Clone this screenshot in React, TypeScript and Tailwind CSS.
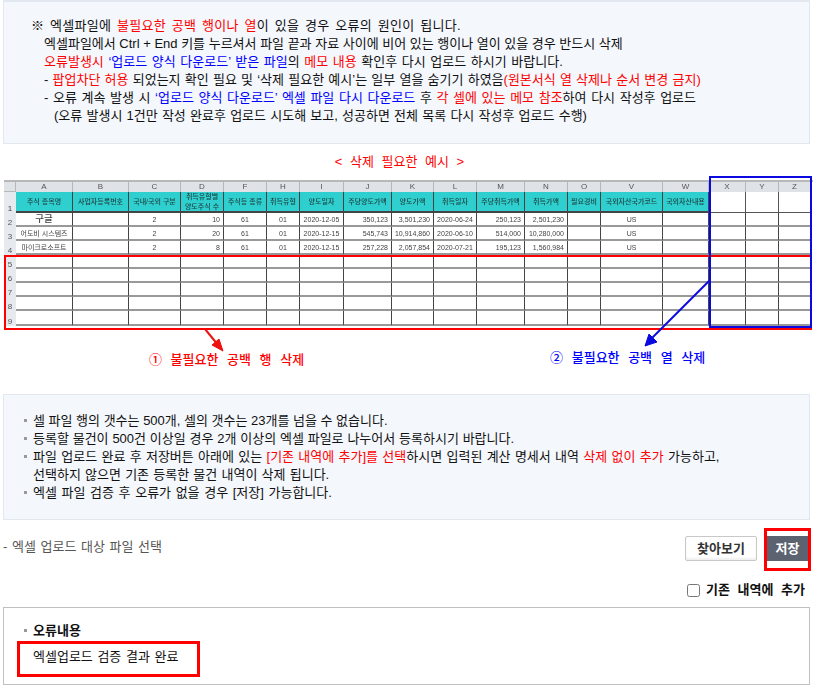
const columns = ['A', 'B', 'C', 'D', 'F', 'H', 'I', 'J', 'K', 'L', 'M', 'N', 'O', 'V', 'W', 'X', 'Y', 'Z'];

const headers = [
  '주식 종목명', '사업자등록번호', '국내/국외 구분', '취득유형별\n양도주식 수', '주식등 종류', '취득유형', '양도일자', '주당양도가액',
  '양도가액', '취득일자', '주당취득가액', '취득가액', '필요경비', '국외자산국가코드', '국외자산내용', '', '', '',
];

const rows = [
  ['구글', '', '2', '10', '61', '01', '2020-12-05', '350,123', '3,501,230', '2020-06-24', '250,123', '2,501,230', '', 'US', '', '', '', ''],
  ['어도비 시스템즈', '', '2', '20', '61', '01', '2020-12-15', '545,743', '10,914,860', '2020-06-10', '514,000', '10,280,000', '', 'US', '', '', '', ''],
  ['마이크로소프트', '', '2', '8', '61', '01', '2020-12-15', '257,228', '2,057,854', '2020-07-21', '195,123', '1,560,984', '', 'US', '', '', '', ''],
];

const rightAligned = [3, 7, 8, 10, 11];
const blankRows = [5, 6, 7, 8, 9];
const blank = Array.from({ length: 18 }, () => '');

function Bullet() {
  return <span className="mr-[6px] mb-[3px] inline-block h-[3px] w-[3px] bg-[#999999] align-middle" />;
}

function Red({ children }: { children: React.ReactNode }) {
  return <span className="text-[#ff0000]">{children}</span>;
}

function Blue({ children }: { children: React.ReactNode }) {
  return <span className="text-[#0000ff]">{children}</span>;
}

function Sheet() {
  return (
    <div className="relative ml-px h-[155px] w-[809px] pt-[6px]">
      <div className="grid grid-cols-[12px_57px_56px_52px_43px_43px_33px_44px_48px_42px_43px_48px_43px_33px_62px_46px_37px_33px_32px] grid-rows-[10px_21px_14px_14px_14px_14px_14px_14px_14px_15px] border-t-2 border-[#b8b8b8] text-[7px] leading-none text-[#444444] blur-[0.3px] [word-spacing:0]">
        <div className="border-r border-b border-[#b8b8b8] bg-[#dfe3e8]" />
        {columns.map((c) => (
          <div key={c} className="flex items-center justify-center border-r border-[#b8b8b8] bg-[#dfe3e8] text-[8px] text-[#555555]">
            {c}
          </div>
        ))}

        <div className="flex items-end justify-center bg-[#e6e9ee] text-[8px]">1</div>
        {headers.map((h, i) =>
          h ? (
            <div key={i} className="flex items-center justify-center whitespace-pre-line border-r border-b-2 border-[#444444] bg-[#2fcfcf] text-center leading-[10px] font-medium text-[#1f3f3f]">
              {h}
            </div>
          ) : (
            <div key={i} className="border-r border-b border-[#555555] bg-white" />
          ),
        )}

        {rows.map((row, r) => (
          <SheetRow key={r} num={r + 2} cells={row} />
        ))}
        {blankRows.map((n) => (
          <SheetRow key={n} num={n} cells={blank} />
        ))}
      </div>

      <div className="absolute top-[81px] left-0 h-[75px] w-[808px] border-2 border-[#ff0000]" />
      <div className="absolute top-[2px] left-[705px] h-[152px] w-[103px] border-2 border-[#0a0ae0]" />

      <svg className="absolute top-0 left-0" width="809" height="180" fill="none">
        <path d="M201 155 L214 171" stroke="#ee1111" strokeWidth="2" />
        <path d="M219 177 L208 171 L215 165 Z" fill="#ee1111" stroke="#ee1111" />
        <path d="M705 107 L647 165" stroke="#0a0ae0" strokeWidth="2" />
        <path d="M641 172 L645 160 L653 168 Z" fill="#0a0ae0" stroke="#0a0ae0" />
      </svg>
    </div>
  );
}

function SheetRow({ num, cells }: { num: number; cells: string[] }) {
  return (
    <>
      <div className="flex items-end justify-center bg-[#e6e9ee] text-[8px] text-[#555555]">{num}</div>
      {cells.map((cell, i) => (
        <div
          key={i}
          className={`flex items-center overflow-hidden whitespace-nowrap border-r border-r-[#444444] border-b-2 border-b-[#999999] bg-white ${
            rightAligned.includes(i) ? 'justify-end pr-[3px]' : 'justify-center'
          } ${cell === '구글' ? 'text-[9.5px] font-medium' : ''}`}
        >
          {cell}
        </div>
      ))}
    </>
  );
}

export default function App() {
  return (
    <div className="h-[693px] w-[819px] overflow-hidden bg-white pl-[3px] font-['Liberation_Sans','Noto_Sans_CJK_KR',sans-serif] text-[13px] leading-[18px] text-[#111111] [word-spacing:1px]">
      {/* Top notice */}
      <div className="h-[144px] w-[807px] border border-t-2 border-[#e2e8f0] bg-[#f4f7fc] pt-[15px] pl-[27px]">
        <p className="tracking-[0.25px] [word-spacing:2px]">※ 엑셀파일에 <Red>불필요한 공백 행이나 열</Red>이 있을 경우 오류의 원인이 됩니다.</p>
        <p className="pl-[13px] [word-spacing:0]">엑셀파일에서 Ctrl + End 키를 누르셔서 파일 끝과 자료 사이에 비어 있는 행이나 열이 있을 경우 반드시 삭제</p>
        <p className="pl-[13px]">
          <Red>오류발생시</Red> <Blue>‘업로드 양식 다운로드’ 받은 파일</Blue>의 <Red>메모 내용</Red> 확인후 다시 업로드 하시기 바랍니다.
        </p>
        <p className="pl-[13px] [word-spacing:0.6px]">
          - <Red>팝업차단 허용</Red> 되었는지 확인 필요 및 ‘삭제 필요한 예시’는 일부 열을 숨기기 하였음<Red>(원본서식 열 삭제나 순서 변경 금지)</Red>
        </p>
        <p className="pl-[13px]">
          - 오류 계속 발생 시 <Blue>‘업로드 양식 다운로드’ 엑셀 파일 다시 다운로드</Blue> 후 <Red>각 셀에 있는 메모 참조</Red>하여 다시 작성후 업로드
        </p>
        <p className="pl-[23px] [word-spacing:0.6px]">(오류 발생시 1건만 작성 완료후 업로드 시도해 보고, 성공하면 전체 목록 다시 작성후 업로드 수행)</p>
      </div>

      <p className="mt-[9px] h-[18px] w-[793px] text-center text-[#ff0000] [word-spacing:4px]">&lt; 삭제 필요한 예시 &gt;</p>

      <div className="mt-[3px]">
        <Sheet />
      </div>

      {/* Arrow captions */}
      <div className="mt-[22px] flex h-[18px] font-medium [word-spacing:5px]">
        <span className="ml-[146px] text-[#ff0000]">① 불필요한 공백 행 삭제</span>
        <span className="-mt-[2px] ml-[246px] text-[#0000ff]">② 불필요한 공백 열 삭제</span>
      </div>

      {/* Rules */}
      <div className="mt-[25px] h-[126px] w-[807px] border border-[#e2e8f0] bg-[#f4f7fc] pt-[17px] pl-[20px]">
        <p className="[word-spacing:0]"><Bullet />셀 파일 행의 갯수는 500개, 셀의 갯수는 23개를 넘을 수 없습니다.</p>
        <p className="[word-spacing:0.2px]"><Bullet />등록할 물건이 500건 이상일 경우 2개 이상의 엑셀 파일로 나누어서 등록하시기 바랍니다.</p>
        <p className="[word-spacing:0.7px]"><Bullet />파일 업로드 완료 후 저장버튼 아래에 있는 <Red>[기존 내역에 추가]를 선택</Red>하시면 입력된 계산 명세서 내역 <Red>삭제 없이 추가</Red> 가능하고,</p>
        <p className="pl-[9px] [word-spacing:0.6px]">선택하지 않으면 기존 등록한 물건 내역이 삭제 됩니다.</p>
        <p><Bullet />엑셀 파일 검증 후 오류가 없을 경우 [저장] 가능합니다.</p>
      </div>

      {/* File select */}
      <div className="mt-[8px] flex h-[43px] w-[808px] items-start">
        <span className="mt-[10px] text-[#555555]">- 엑셀 업로드 대상 파일 선택</span>
        <button className="mt-[8px] ml-auto h-[25px] w-[72px] rounded-[2px] border border-[#c8c8c8] bg-white text-[13px] font-bold text-[#333333] shadow-[inset_0_-2px_2px_#f0f0f0]">
          찾아보기
        </button>
        <div className="ml-[7px] flex h-[43px] w-[47px] items-start border-[3px] border-[#ff0000] bg-white pt-[5px]">
          <button className="h-[25px] w-[41px] bg-[#5c6270] text-[13px] font-bold text-white">저장</button>
        </div>
      </div>

      <label className="mt-[10px] flex h-[18px] w-[802px] items-center justify-end gap-[6px] font-bold text-[#111111] [word-spacing:4px]">
        <input type="checkbox" className="h-[13px] w-[13px]" />
        기존 내역에 추가
      </label>

      {/* Validation result */}
      <div className="mt-[8px] h-[78px] w-[807px] border border-[#c0c0c0] pt-[14px] pl-[20px]">
        <p className="font-bold"><Bullet />오류내용</p>
        <div className="-ml-[7px] mt-px h-[36px] w-[183px] border-[3px] border-[#ff0000] pt-[4px] pl-[13px]">엑셀업로드 검증 결과 완료</div>
      </div>
    </div>
  );
}
